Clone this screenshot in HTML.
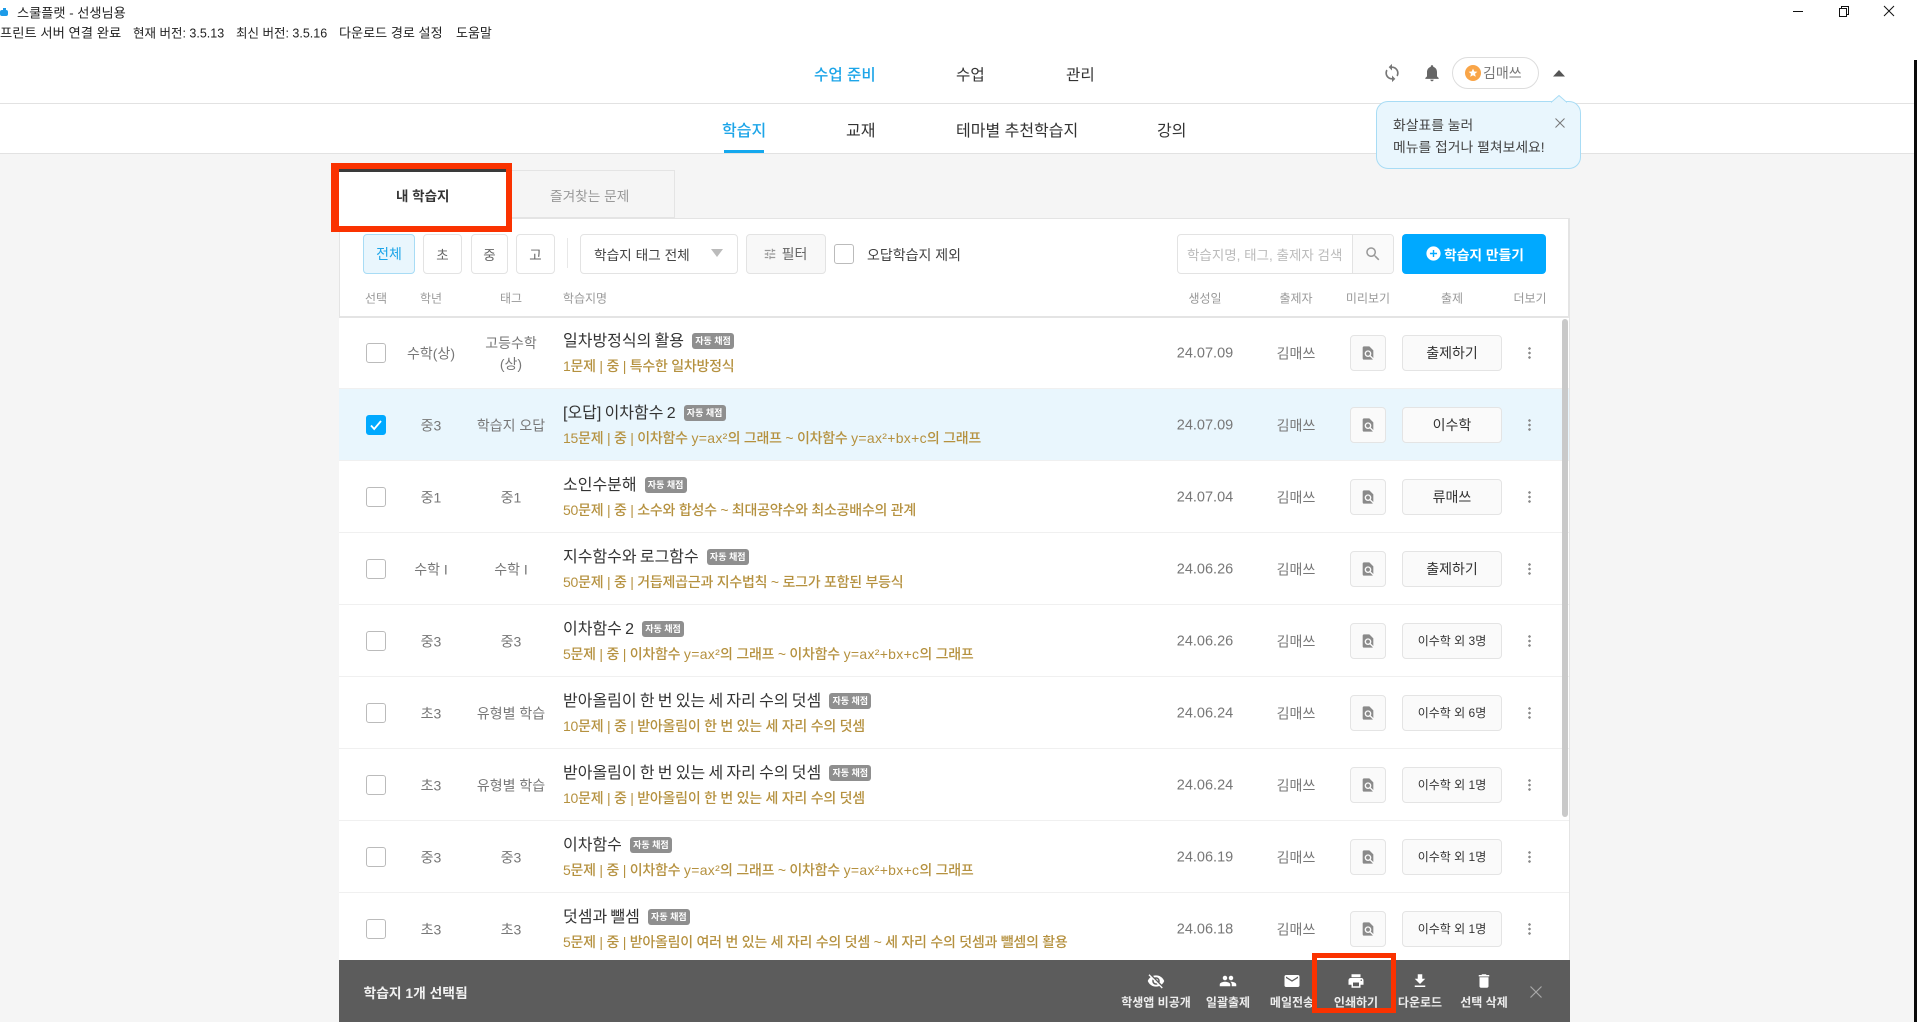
<!DOCTYPE html>
<html lang="ko"><head><meta charset="utf-8"><title>스쿨플랫 - 선생님용</title>
<style>
*{box-sizing:border-box;margin:0;padding:0}
html,body{width:1917px;height:1022px;overflow:hidden;background:#f5f5f5;font-family:"Liberation Sans","Noto Sans CJK KR",sans-serif;color:#333}
.a{position:absolute}
.t{position:absolute;white-space:nowrap;transform:translateY(-50%)}
.c{position:absolute;white-space:nowrap;transform:translate(-50%,-50%);text-align:center}
svg{position:absolute;display:block}
.btn{position:absolute;top:234px;height:40px;border:1px solid #e3e3e3;border-radius:4px;background:#fff;display:flex;align-items:center;justify-content:center;font-size:13.5px;color:#666}
.row{position:absolute;left:339px;width:1230px;height:72px;background:#fff;border-bottom:1px solid #f0f0f0}
.row.sel{background:#e9f6fd}
.cb{position:absolute;left:27px;top:26px;width:20px;height:20px;border:1px solid #bbb;border-radius:3px;background:#fff}
.gr,.tg,.dt,.au{position:absolute;top:37px;transform:translate(-50%,-50%);font-size:14px;color:#777;white-space:nowrap;text-align:center;line-height:21px}
.gr{left:92px}.tg{left:172px}.dt{left:866px;font-size:14.5px}.au{left:957px}
.ti{position:absolute;left:224px;top:13px;height:24px;line-height:24px;font-size:16px;word-spacing:-1.2px;color:#333;white-space:nowrap}
.bd{display:inline-block;vertical-align:2px;margin-left:8px;width:42px;height:16px;line-height:16px;border-radius:3px;background:#8f8f8f;color:#fff;font-size:9px;font-weight:700;text-align:center;word-spacing:0}
.su{position:absolute;left:224px;top:38px;height:22px;line-height:22px;font-size:14px;color:#b5913f;white-space:nowrap;letter-spacing:-.25px;font-weight:500}
.su .l{letter-spacing:.3px}
.pv{position:absolute;left:1011px;top:18px;width:36px;height:36px;border:1px solid #e4e4e4;border-radius:4px;background:#fafafa}
.as{position:absolute;left:1063px;top:18px;width:100px;height:36px;border:1px solid #e4e4e4;border-radius:4px;background:#fafafa;text-align:center;line-height:34px;font-size:14px;color:#333}
.as.s{font-size:12px}
.km{position:absolute;left:1189px;top:30px;width:3px;height:12px;background:radial-gradient(circle at 1.5px 1.5px,#888 1.2px,transparent 1.4px) 0 0/3px 4.5px repeat-y}
.hd{position:absolute;top:298px;transform:translate(-50%,-50%);font-size:12px;color:#999;white-space:nowrap}
.ac{position:absolute;top:1002px;transform:translate(-50%,-50%);font-size:12px;font-weight:700;color:#eee;white-space:nowrap}
</style></head><body>

<!-- title bar -->
<div class="a" style="left:0;top:0;width:1917px;height:103px;background:#fff"></div>
<div class="a" style="left:0;top:10px;width:8px;height:6px;background:#1d9be8;border-radius:2px"></div>
<div class="a" style="left:3px;top:8px;width:3px;height:3px;background:#1d9be8"></div>
<div class="t" style="left:17px;top:12px;font-size:13.2px;color:#222">스쿨플랫 - 선생님용</div>
<div class="t" style="left:0;top:32px;font-size:13.3px;color:#222">프린트 서버 연결 완료</div>
<div class="t" style="left:133px;top:32px;font-size:12.5px;color:#222">현재 버전: 3.5.13</div>
<div class="t" style="left:236px;top:32px;font-size:12.5px;color:#222">최신 버전: 3.5.16</div>
<div class="t" style="left:339px;top:32px;font-size:13.1px;color:#222">다운로드 경로 설정</div>
<div class="t" style="left:456px;top:32px;font-size:13px;color:#222">도움말</div>
<svg style="left:1790px;top:2px" width="110" height="18" viewBox="0 0 110 18" fill="none" stroke="#111" stroke-width="1"><path d="M3 9.500h10"/><path d="M49.500 6.500h7v8h-7zM51.500 6.500v-2h7v8h-2"/><path d="M94 4l10 10M104 4l-10 10"/></svg>

<!-- nav -->
<div class="a" style="left:0;top:103px;width:1914px;height:51px;background:#fff;border-top:1px solid #e2e2e2;border-bottom:1px solid #e2e2e2"></div>
<div class="t" style="left:814px;top:74px;font-size:15.6px;font-weight:500;color:#1da5e8">수업 준비</div>
<div class="t" style="left:956px;top:74px;font-size:15.6px;color:#333">수업</div>
<div class="t" style="left:1066px;top:74px;font-size:15.6px;color:#333">관리</div>
<div class="t" style="left:722px;top:129px;font-size:16px;font-weight:500;color:#1da5e8">학습지</div>
<div class="t" style="left:846px;top:129px;font-size:16px;color:#333">교재</div>
<div class="t" style="left:956px;top:129px;font-size:16px;color:#333">테마별 추천학습지</div>
<div class="t" style="left:1157px;top:129px;font-size:16px;color:#333">강의</div>
<div class="a" style="left:724px;top:150px;width:40px;height:3px;background:#14a8ee"></div>

<svg style="left:1382px;top:63px" width="20" height="20" viewBox="0 0 24 24" fill="#777"><path d="M12 4V1L8 5l4 4V6c3.310 0 6 2.690 6 6 0 1.010-.25 1.970-.7 2.800l1.460 1.460C19.540 15.030 20 13.570 20 12c0-4.420-3.580-8-8-8zm0 14c-3.310 0-6-2.690-6-6 0-1.010.25-1.970.7-2.800L5.240 7.740C4.460 8.970 4 10.430 4 12c0 4.420 3.580 8 8 8v3l4-4-4-4v3z"/></svg>
<svg style="left:1422px;top:63px" width="20" height="20" viewBox="0 0 24 24" fill="#666"><path d="M12 22c1.100 0 2-.9 2-2h-4c0 1.100.89 2 2 2zm6-6v-5c0-3.070-1.640-5.640-4.500-6.320V4c0-.83-.67-1.500-1.500-1.500s-1.500.67-1.500 1.500v.68C7.630 5.360 6 7.920 6 11v5l-2 2v1h16v-1l-2-2z"/></svg>
<div class="a" style="left:1452px;top:57px;width:87px;height:32px;border:1px solid #ddd;border-radius:16px;background:#fff"></div>
<svg style="left:1465px;top:65px" width="16" height="16" viewBox="0 0 16 16"><circle cx="8" cy="8" r="8" fill="#f9a548"/><path d="M8 3.600l1.300 2.900 3.100.3-2.400 2 .8 3L8 10.200 5.200 11.800l.8-3-2.400-2 3.100-.3z" fill="#fff"/></svg>
<div class="t" style="left:1483px;top:73px;font-size:14px;color:#777">김매쓰</div>
<svg style="left:1553px;top:70px" width="12" height="7" viewBox="0 0 12 7" fill="#555"><path d="M6 0l6 6.500H0z"/></svg>

<!-- page tabs -->
<div class="a" style="left:506px;top:170px;width:169px;height:48px;background:#f5f5f5;border:1px solid #e4e4e4;border-left:none"></div>
<div class="t" style="left:550px;top:195px;font-size:13.7px;color:#999">즐겨찾는 문제</div>

<!-- panel -->
<div class="a" style="left:339px;top:218px;width:1231px;height:742px;background:#fff;border:1px solid #e4e4e4;border-bottom:none;border-right-width:2px"></div>
<div class="a" style="left:339px;top:172px;width:167px;height:54px;background:#fff"></div>
<div class="a" style="left:339px;top:169px;width:167px;height:3px;background:#3a3a3a"></div>
<div class="t" style="left:396px;top:195px;font-size:13.5px;font-weight:700;color:#333">내 학습지</div>

<!-- toolbar -->
<div class="btn" style="left:363px;width:52px;background:#e9f6fd;border-color:#a8dcf5;color:#1da5e8;font-size:14px">전체</div>
<div class="btn" style="left:423px;width:39px">초</div>
<div class="btn" style="left:471px;width:37px">중</div>
<div class="btn" style="left:516px;width:39px">고</div>
<div class="a" style="left:567px;top:238px;width:1px;height:30px;background:#e8e8e8"></div>
<div class="btn" style="left:580px;width:158px;justify-content:flex-start;padding-left:13px;color:#444;font-size:13.7px">학습지 태그 전체</div>
<svg style="left:711px;top:249px" width="12" height="8" viewBox="0 0 12 8" fill="#bbb"><path d="M0 0h12L6 8z"/></svg>
<div class="btn" style="left:746px;width:80px;background:#f8f8f8;padding-left:17px;color:#666;font-size:14px">필터</div>
<svg style="left:763px;top:247px" width="14" height="14" viewBox="0 0 24 24" fill="#999"><path d="M3 17v2h6v-2H3zM3 5v2h10V5H3zm10 16v-2h8v-2h-8v-2h-2v6h2zM7 9v2H3v2h4v2h2V9H7zm14 4v-2H11v2h10zm-6-4h2V7h4V5h-4V3h-2v6z"/></svg>
<div class="a" style="left:834px;top:244px;width:20px;height:20px;border:1px solid #bbb;border-radius:3px;background:#fff"></div>
<div class="t" style="left:867px;top:255px;font-size:14px;color:#444">오답학습지 제외</div>

<div class="a" style="left:1177px;top:234px;width:217px;height:40px;border:1px solid #e3e3e3;border-radius:4px;background:#fff"></div>
<div class="a" style="left:1352px;top:235px;width:41px;height:38px;background:#fafafa;border-left:1px solid #e3e3e3;border-radius:0 3px 3px 0"></div>
<div class="t" style="left:1187px;top:254px;font-size:13.5px;color:#bbb">학습지명, 태그, 출제자 검색</div>
<svg style="left:1364px;top:245px" width="18" height="18" viewBox="0 0 24 24" fill="#999"><path d="M15.500 14h-.79l-.28-.27C15.410 12.590 16 11.110 16 9.500 16 5.910 13.090 3 9.500 3S3 5.910 3 9.500 5.910 16 9.500 16c1.610 0 3.090-.59 4.230-1.570l.27.280v.790l5 4.990L20.490 19l-4.990-5zm-6 0C7.010 14 5 11.990 5 9.500S7.010 5 9.500 5 14 7.010 14 9.500 11.990 14 9.500 14z"/></svg>
<div class="a" style="left:1402px;top:234px;width:144px;height:40px;background:#00a9ff;border-radius:4px"></div>
<svg style="left:1425px;top:245px" width="17" height="17" viewBox="0 0 24 24" fill="#fff"><path d="M12 2C6.480 2 2 6.480 2 12s4.480 10 10 10 10-4.480 10-10S17.520 2 12 2zm5 11h-4v4h-2v-4H7v-2h4V7h2v4h4v2z"/></svg>
<div class="t" style="left:1444px;top:254px;font-size:13.8px;font-weight:700;color:#fff">학습지 만들기</div>

<!-- headers -->
<div class="hd" style="left:376px">선택</div><div class="hd" style="left:431px">학년</div><div class="hd" style="left:511px">태그</div><div class="hd" style="left:585px">학습지명</div><div class="hd" style="left:1205px">생성일</div><div class="hd" style="left:1296px">출제자</div><div class="hd" style="left:1368px">미리보기</div><div class="hd" style="left:1452px">출제</div><div class="hd" style="left:1530px">더보기</div>
<div class="a" style="left:340px;top:316px;width:1228px;height:2px;background:#e4e4e4"></div>

<!-- rows -->
<div class="row" style="top:318px;height:71px"><div class="cb" style="top:25px"></div><div class="gr" style="top:36px">수학(상)</div><div class="tg" style="top:36px">고등수학<br>(상)</div><div class="ti" style="top:12px">일차방정식의 활용<span class="bd">자동 채점</span></div><div class="su" style="top:37px">1문제 | 중 | 특수한 일차방정식</div><div class="dt" style="top:36px">24.07.09</div><div class="au" style="top:36px">김매쓰</div><div class="pv" style="top:17px"></div><div class="as" style="top:17px">출제하기</div><div class="km" style="top:29px"></div></div>

<div class="row sel" style="top:389px"><div class="cb" style="background:#00a9ff;border-color:#00a9ff"></div><svg style="left:31px;top:30px" width="12" height="12" viewBox="0 0 12 12" fill="none" stroke="#fff" stroke-width="1.800"><path d="M1 6.500l3.200 3.500L11 2"/></svg><div class="gr">중3</div><div class="tg">학습지 오답</div><div class="ti">[오답] 이차함수 2<span class="bd">자동 채점</span></div><div class="su">15문제 | 중 | 이차함수 <span class="l">y=ax²</span>의 그래프 ~ 이차함수 <span class="l">y=ax²+bx+c</span>의 그래프</div><div class="dt">24.07.09</div><div class="au">김매쓰</div><div class="pv"></div><div class="as">이수학</div><div class="km"></div></div>

<div class="row" style="top:461px"><div class="cb"></div><div class="gr">중1</div><div class="tg">중1</div><div class="ti">소인수분해<span class="bd">자동 채점</span></div><div class="su">50문제 | 중 | 소수와 합성수 ~ 최대공약수와 최소공배수의 관계</div><div class="dt">24.07.04</div><div class="au">김매쓰</div><div class="pv"></div><div class="as">류매쓰</div><div class="km"></div></div>

<div class="row" style="top:533px"><div class="cb"></div><div class="gr">수학 I</div><div class="tg">수학 I</div><div class="ti">지수함수와 로그함수<span class="bd">자동 채점</span></div><div class="su">50문제 | 중 | 거듭제곱근과 지수법칙 ~ 로그가 포함된 부등식</div><div class="dt">24.06.26</div><div class="au">김매쓰</div><div class="pv"></div><div class="as">출제하기</div><div class="km"></div></div>

<div class="row" style="top:605px"><div class="cb"></div><div class="gr">중3</div><div class="tg">중3</div><div class="ti">이차함수 2<span class="bd">자동 채점</span></div><div class="su">5문제 | 중 | 이차함수 <span class="l">y=ax²</span>의 그래프 ~ 이차함수 <span class="l">y=ax²+bx+c</span>의 그래프</div><div class="dt">24.06.26</div><div class="au">김매쓰</div><div class="pv"></div><div class="as s">이수학 외 3명</div><div class="km"></div></div>

<div class="row" style="top:677px"><div class="cb"></div><div class="gr">초3</div><div class="tg">유형별 학습</div><div class="ti">받아올림이 한 번 있는 세 자리 수의 덧셈<span class="bd">자동 채점</span></div><div class="su">10문제 | 중 | 받아올림이 한 번 있는 세 자리 수의 덧셈</div><div class="dt">24.06.24</div><div class="au">김매쓰</div><div class="pv"></div><div class="as s">이수학 외 6명</div><div class="km"></div></div>

<div class="row" style="top:749px"><div class="cb"></div><div class="gr">초3</div><div class="tg">유형별 학습</div><div class="ti">받아올림이 한 번 있는 세 자리 수의 덧셈<span class="bd">자동 채점</span></div><div class="su">10문제 | 중 | 받아올림이 한 번 있는 세 자리 수의 덧셈</div><div class="dt">24.06.24</div><div class="au">김매쓰</div><div class="pv"></div><div class="as s">이수학 외 1명</div><div class="km"></div></div>

<div class="row" style="top:821px"><div class="cb"></div><div class="gr">중3</div><div class="tg">중3</div><div class="ti">이차함수<span class="bd">자동 채점</span></div><div class="su">5문제 | 중 | 이차함수 <span class="l">y=ax²</span>의 그래프 ~ 이차함수 <span class="l">y=ax²+bx+c</span>의 그래프</div><div class="dt">24.06.19</div><div class="au">김매쓰</div><div class="pv"></div><div class="as s">이수학 외 1명</div><div class="km"></div></div>

<div class="row" style="top:893px;height:67px;border:none"><div class="cb"></div><div class="gr">초3</div><div class="tg">초3</div><div class="ti">덧셈과 뺄셈<span class="bd">자동 채점</span></div><div class="su">5문제 | 중 | 받아올림이 여러 번 있는 세 자리 수의 덧셈 ~ 세 자리 수의 덧셈과 뺄셈의 활용</div><div class="dt">24.06.18</div><div class="au">김매쓰</div><div class="pv"></div><div class="as s">이수학 외 1명</div><div class="km"></div></div>

<!-- preview icons -->
<svg style="left:1360px;top:345px" width="16" height="16" viewBox="0 0 24 24" fill="#8a8a8a"><defs><path id="fp" d="M20 19.590V8l-6-6H6c-1.100 0-1.990.9-1.990 2L4 20c0 1.100.89 2 1.990 2H18c.45 0 .85-.15 1.190-.4l-4.430-4.430c-.8.520-1.740.83-2.760.83-2.760 0-5-2.240-5-5s2.240-5 5-5 5 2.240 5 5c0 1.020-.31 1.960-.83 2.750L20 19.590zM9 13c0 1.660 1.340 3 3 3s3-1.340 3-3-1.340-3-3-3-3 1.340-3 3z"/></defs><use href="#fp"/></svg>
<svg style="left:1360px;top:417px" width="16" height="16" viewBox="0 0 24 24" fill="#8a8a8a"><use href="#fp"/></svg>
<svg style="left:1360px;top:489px" width="16" height="16" viewBox="0 0 24 24" fill="#8a8a8a"><use href="#fp"/></svg>
<svg style="left:1360px;top:561px" width="16" height="16" viewBox="0 0 24 24" fill="#8a8a8a"><use href="#fp"/></svg>
<svg style="left:1360px;top:633px" width="16" height="16" viewBox="0 0 24 24" fill="#8a8a8a"><use href="#fp"/></svg>
<svg style="left:1360px;top:705px" width="16" height="16" viewBox="0 0 24 24" fill="#8a8a8a"><use href="#fp"/></svg>
<svg style="left:1360px;top:777px" width="16" height="16" viewBox="0 0 24 24" fill="#8a8a8a"><use href="#fp"/></svg>
<svg style="left:1360px;top:849px" width="16" height="16" viewBox="0 0 24 24" fill="#8a8a8a"><use href="#fp"/></svg>
<svg style="left:1360px;top:921px" width="16" height="16" viewBox="0 0 24 24" fill="#8a8a8a"><use href="#fp"/></svg>

<!-- scrollbar -->
<div class="a" style="left:1562px;top:319px;width:6px;height:498px;background:#c9c9c9;border-radius:3px"></div>

<!-- bottom bar -->
<div class="a" style="left:339px;top:960px;width:1231px;height:62px;background:#5c5c5c"></div>
<div class="t" style="left:363.5px;top:992px;font-size:13.8px;font-weight:700;color:#f2f2f2">학습지 1개 선택됨</div>
<svg style="left:1147px;top:972px" width="18" height="18" viewBox="0 0 24 24" fill="#fff"><path d="M12 7c2.760 0 5 2.240 5 5 0 .65-.13 1.260-.36 1.830l2.920 2.920c1.510-1.260 2.700-2.890 3.430-4.750-1.730-4.390-6-7.500-11-7.500-1.400 0-2.740.25-3.980.7l2.160 2.160C10.740 7.130 11.350 7 12 7zM2 4.270l2.280 2.280.46.46C3.080 8.300 1.780 10.020 1 12c1.730 4.390 6 7.500 11 7.500 1.550 0 3.030-.3 4.380-.84l.42.42L19.730 22 21 20.730 3.270 3 2 4.270zM7.530 9.800l1.550 1.550c-.05.21-.08.43-.08.65 0 1.660 1.340 3 3 3 .22 0 .44-.03.65-.08l1.550 1.550c-.67.33-1.410.53-2.200.53-2.760 0-5-2.240-5-5 0-.79.2-1.530.53-2.200zm4.310-.78l3.150 3.150.02-.16c0-1.660-1.340-3-3-3l-.17.010z"/></svg>
<svg style="left:1219px;top:972px" width="18" height="18" viewBox="0 0 24 24" fill="#fff"><path d="M16 11c1.660 0 2.990-1.340 2.990-3S17.660 5 16 5c-1.660 0-3 1.340-3 3s1.340 3 3 3zm-8 0c1.660 0 2.990-1.340 2.990-3S9.660 5 8 5C6.340 5 5 6.340 5 8s1.340 3 3 3zm0 2c-2.330 0-7 1.170-7 3.500V19h14v-2.500c0-2.330-4.670-3.500-7-3.500zm8 0c-.29 0-.62.020-.97.050 1.160.84 1.970 1.970 1.970 3.450V19h6v-2.500c0-2.330-4.670-3.500-7-3.500z"/></svg>
<svg style="left:1283px;top:972px" width="18" height="18" viewBox="0 0 24 24" fill="#fff"><path d="M20 4H4c-1.100 0-1.990.9-1.990 2L2 18c0 1.100.9 2 2 2h16c1.100 0 2-.9 2-2V6c0-1.100-.9-2-2-2zm0 4l-8 5-8-5V6l8 5 8-5v2z"/></svg>
<svg style="left:1347px;top:972px" width="18" height="18" viewBox="0 0 24 24" fill="#fff"><path d="M19 8H5c-1.660 0-3 1.340-3 3v6h4v4h12v-4h4v-6c0-1.660-1.340-3-3-3zm-3 11H8v-5h8v5zm3-7c-.55 0-1-.45-1-1s.45-1 1-1 1 .45 1 1-.45 1-1 1zm-1-9H6v4h12V3z"/></svg>
<svg style="left:1411px;top:972px" width="18" height="18" viewBox="0 0 24 24" fill="#fff"><path d="M19 9h-4V3H9v6H5l7 7 7-7zM5 18v2h14v-2H5z"/></svg>
<svg style="left:1475px;top:972px" width="18" height="18" viewBox="0 0 24 24" fill="#fff"><path d="M6 19c0 1.100.9 2 2 2h8c1.100 0 2-.9 2-2V7H6v12zM19 4h-3.500l-1-1h-5l-1 1H5v2h14V4z"/></svg>
<div class="ac" style="left:1156px">학생앱 비공개</div><div class="ac" style="left:1228px">일괄출제</div><div class="ac" style="left:1292px">메일전송</div><div class="ac" style="left:1356px">인쇄하기</div><div class="ac" style="left:1420px">다운로드</div><div class="ac" style="left:1484px">선택 삭제</div>
<svg style="left:1530px;top:986px" width="12" height="12" viewBox="0 0 12 12" stroke="#a8a8a8" stroke-width="1.200" fill="none"><path d="M.5.5l11 11M11.500.5l-11 11"/></svg>

<!-- tooltip -->
<div class="a" style="left:1376px;top:101px;width:205px;height:68px;background:#e9f6fd;border:1px solid #a8dcf5;border-radius:12px"></div>
<svg style="left:1551px;top:95px" width="16" height="8" viewBox="0 0 16 8"><path d="M0 7.500L8 .5l8 7" fill="#e9f6fd" stroke="#a8dcf5"/><path d="M1 8h14v-1H1z" fill="#e9f6fd"/></svg>
<div class="t" style="left:1393px;top:124px;font-size:13.85px;color:#444">화살표를 눌러</div>
<div class="t" style="left:1393px;top:145.500px;font-size:13.85px;color:#444">메뉴를 접거나 펼쳐보세요!</div>
<svg style="left:1555px;top:118px" width="10" height="10" viewBox="0 0 10 10" stroke="#777" fill="none"><path d="M.5.5l9 9M9.500.5l-9 9"/></svg>

<!-- red annotation boxes -->
<div class="a" style="left:331px;top:163px;width:181px;height:69px;border:solid #fa3200;border-width:6px 6px 6px 8px"></div>
<div class="a" style="left:1312px;top:953px;width:84px;height:60px;border:5px solid #fa3200"></div>

<!-- right edge -->
<div class="a" style="left:1914px;top:60px;width:3px;height:962px;background:#0a0a0a"></div>
</body></html>
